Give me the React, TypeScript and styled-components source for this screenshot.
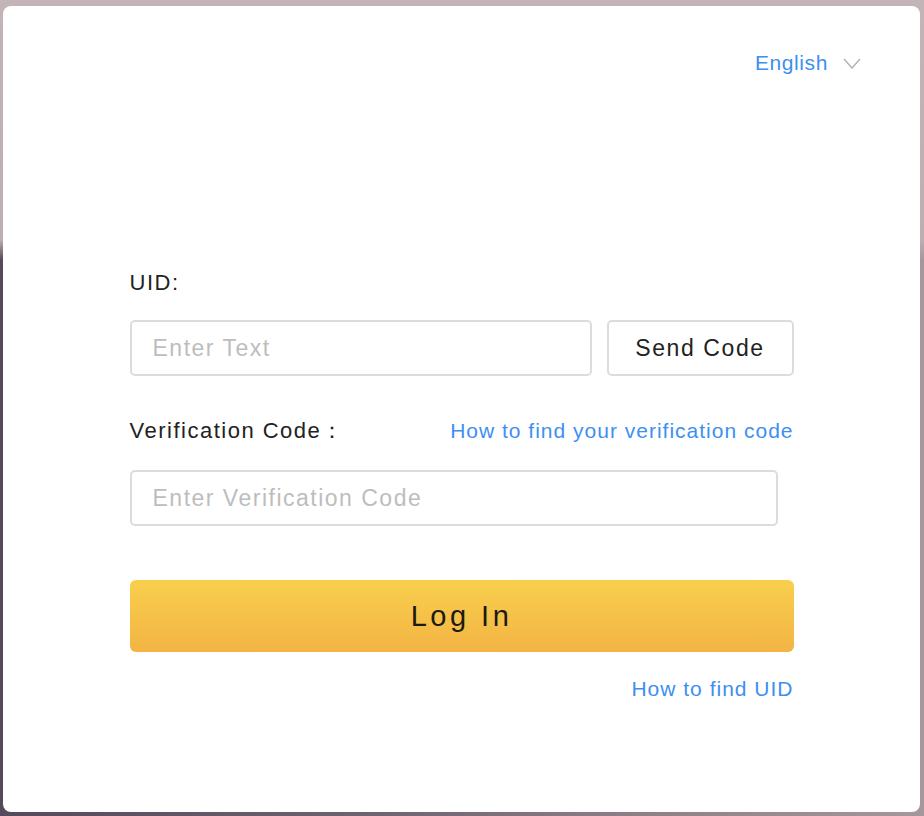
import { useState } from 'react';
import styled, { createGlobalStyle } from 'styled-components';

const GlobalStyle = createGlobalStyle`
  html, body {
    margin: 0;
    padding: 0;
  }
  body {
    font-family: 'Liberation Sans', Arial, sans-serif;
    background:
      linear-gradient(180deg, #c3b4b7 0px, #bcaeb1 240px, rgba(0, 0, 0, 0) 260px),
      linear-gradient(90deg, #544a5a 0px, #6e6370 40%, #8f8088 70%, #a7969b 100%);
    background-color: #5f5464;
    min-height: 816px;
  }
`;

const Frame = styled.div`
  padding: 6px 4px 4px 3px;
  height: 816px;
  box-sizing: border-box;
`;

const Card = styled.div`
  height: 100%;
  background: #ffffff;
  border-radius: 8px;
  display: flex;
  flex-direction: column;
`;

const Header = styled.div`
  display: flex;
  justify-content: flex-end;
  padding: 45px 59px 0 0;
`;

const LangSelect = styled.button`
  display: flex;
  align-items: center;
  gap: 15px;
  border: none;
  background: none;
  padding: 0;
  font-family: inherit;
  font-size: 21px;
  line-height: 24px;
  letter-spacing: 0.6px;
  color: #3d8ff2;
  cursor: pointer;
`;

const Form = styled.form`
  width: 664px;
  margin: 194px auto 0;
  display: flex;
  flex-direction: column;
`;

const LabelRow = styled.div<{ $gap: number }>`
  display: flex;
  justify-content: space-between;
  align-items: center;
  margin-top: ${(p) => p.$gap}px;
  height: 28px;
`;

const Label = styled.label`
  font-size: 22px;
  color: #222222;
  letter-spacing: 1.5px;
`;

const HelpLink = styled.a`
  font-size: 21px;
  color: #3d8ff2;
  text-decoration: none;
  letter-spacing: 1px;
  cursor: pointer;
`;

const InputRow = styled.div<{ $gap: number }>`
  display: flex;
  gap: 15px;
  margin-top: ${(p) => p.$gap}px;
`;

const TextInput = styled.input<{ $width: number }>`
  width: ${(p) => p.$width}px;
  height: 56px;
  box-sizing: border-box;
  border: 2px solid #dcdcdc;
  border-radius: 5px;
  padding: 0 21px;
  font-family: inherit;
  font-size: 23px;
  letter-spacing: 1.5px;
  color: #222;
  outline: none;
  &::placeholder {
    color: #bdbdbd;
  }
`;

const SendButton = styled.button`
  flex: 1;
  height: 56px;
  box-sizing: border-box;
  border: 2px solid #dcdcdc;
  border-radius: 5px;
  background: #fff;
  font-family: inherit;
  font-size: 23px;
  letter-spacing: 1.6px;
  color: #222222;
  cursor: pointer;
`;

const LoginButton = styled.button`
  margin-top: 54px;
  height: 72px;
  border: none;
  border-radius: 6px;
  background: linear-gradient(180deg, #f8cf4d 0%, #f3b444 100%);
  font-family: inherit;
  font-size: 29px;
  letter-spacing: 3.5px;
  color: #1c1a16;
  cursor: pointer;
`;

const Footer = styled.div`
  display: flex;
  justify-content: flex-end;
  margin-top: 25px;
  line-height: 24px;
`;

const Chevron = () => (
  <svg width="18" height="11" viewBox="0 0 18 11" fill="none">
    <path d="M1 1L9 10L17 1" stroke="#b4b4b4" strokeWidth="1.5" />
  </svg>
);

export default function App() {
  const [uid, setUid] = useState('');
  const [code, setCode] = useState('');

  return (
    <>
      <GlobalStyle />
      <Frame>
        <Card>
          <Header>
            <LangSelect type="button">
              English
              <Chevron />
            </LangSelect>
          </Header>
          <Form onSubmit={(e) => e.preventDefault()}>
            <LabelRow $gap={0}>
              <Label htmlFor="uid">UID:</Label>
            </LabelRow>
            <InputRow $gap={23}>
              <TextInput
                id="uid"
                $width={462}
                placeholder="Enter Text"
                value={uid}
                onChange={(e) => setUid(e.target.value)}
              />
              <SendButton type="button">Send Code</SendButton>
            </InputRow>
            <LabelRow $gap={41}>
              <Label htmlFor="code">Verification Code：</Label>
              <HelpLink>How to find your verification code</HelpLink>
            </LabelRow>
            <InputRow $gap={25}>
              <TextInput
                id="code"
                $width={648}
                placeholder="Enter Verification Code"
                value={code}
                onChange={(e) => setCode(e.target.value)}
              />
            </InputRow>
            <LoginButton type="submit">Log In</LoginButton>
            <Footer>
              <HelpLink>How to find UID</HelpLink>
            </Footer>
          </Form>
        </Card>
      </Frame>
    </>
  );
}
